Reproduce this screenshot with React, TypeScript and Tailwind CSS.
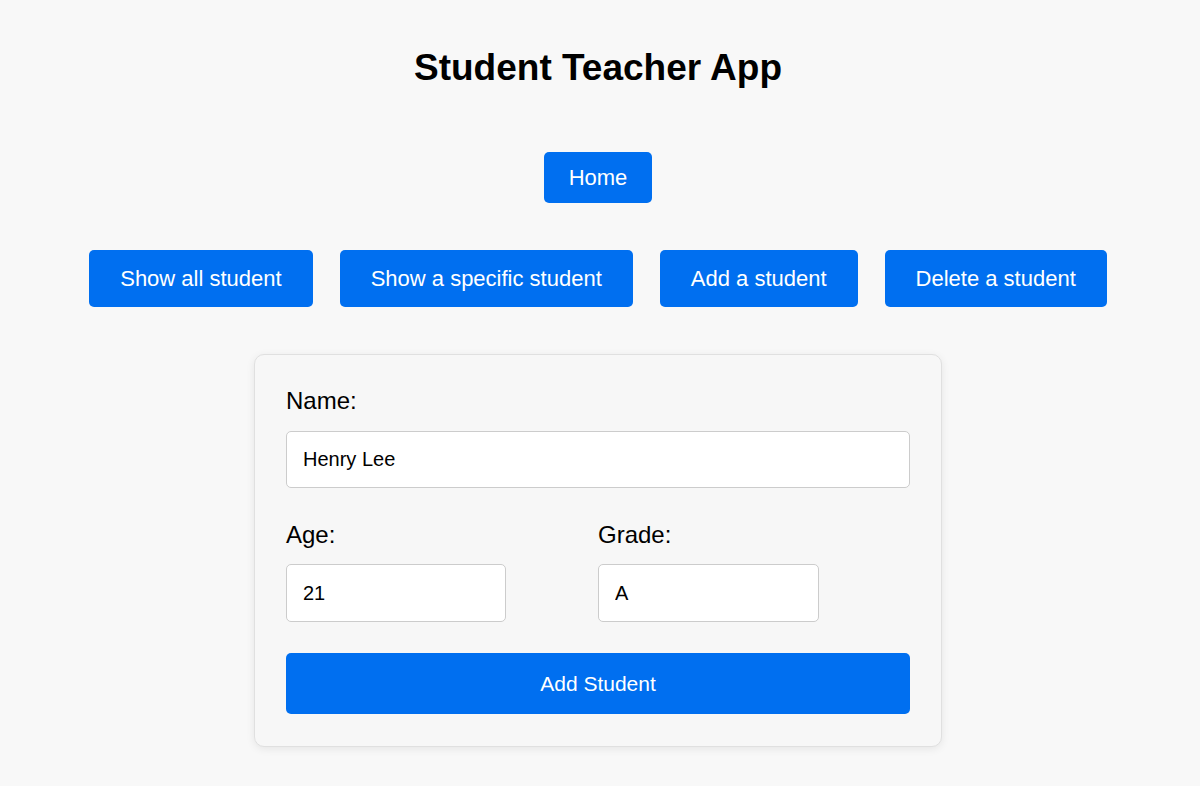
import React, { useState } from "react";

const navItems = ["Show all student", "Show a specific student", "Add a student", "Delete a student"];

export default function App() {
  const [name, setName] = useState("Henry Lee");
  const [age, setAge] = useState("21");
  const [grade, setGrade] = useState("A");

  return (
    <main className="min-h-screen bg-[#f8f8f8] font-['Liberation_Sans',Arial,sans-serif] text-black flex flex-col items-center pt-[47px] pr-[4px]">
      <h1 className="text-[37px] font-bold leading-[42px]">Student Teacher App</h1>

      <button className="mt-[63px] h-[51px] px-[25px] rounded-[5px] bg-[#006ff0] text-white text-[22px]">
        Home
      </button>

      <nav className="mt-[47px] flex gap-[27px]">
        {navItems.map((item) => (
          <button
            key={item}
            className="h-[57px] px-[31px] rounded-[5px] bg-[#006ff0] text-white text-[22px]"
          >
            {item}
          </button>
        ))}
      </nav>

      <form
        className="mt-[47px] w-[688px] rounded-[10px] border border-[#e0e0e0] bg-[#f7f7f7] shadow-[0_2px_8px_rgba(0,0,0,0.08)] px-[31px] pt-[32px] pb-[32px]"
        onSubmit={(e) => e.preventDefault()}
      >
        <label className="block text-[24px] leading-[28px] mb-[16px]">Name:</label>
        <input
          value={name}
          onChange={(e) => setName(e.target.value)}
          className="w-full h-[57px] rounded-[5px] border border-[#cccccc] bg-white px-[16px] text-[20px] outline-none"
        />

        <div className="mt-[33px] flex">
          <div className="w-[312px]">
            <label className="block text-[24px] leading-[28px] mb-[15px]">Age:</label>
            <input
              value={age}
              onChange={(e) => setAge(e.target.value)}
              className="w-[220px] h-[58px] rounded-[5px] border border-[#cccccc] bg-white px-[16px] text-[20px] outline-none"
            />
          </div>
          <div className="w-[312px]">
            <label className="block text-[24px] leading-[28px] mb-[15px]">Grade:</label>
            <input
              value={grade}
              onChange={(e) => setGrade(e.target.value)}
              className="w-[221px] h-[58px] rounded-[5px] border border-[#cccccc] bg-white px-[16px] text-[20px] outline-none"
            />
          </div>
        </div>

        <button
          type="submit"
          className="mt-[31px] w-full h-[61px] rounded-[5px] bg-[#006ff0] text-white text-[21px]"
        >
          Add Student
        </button>
      </form>
    </main>
  );
}
